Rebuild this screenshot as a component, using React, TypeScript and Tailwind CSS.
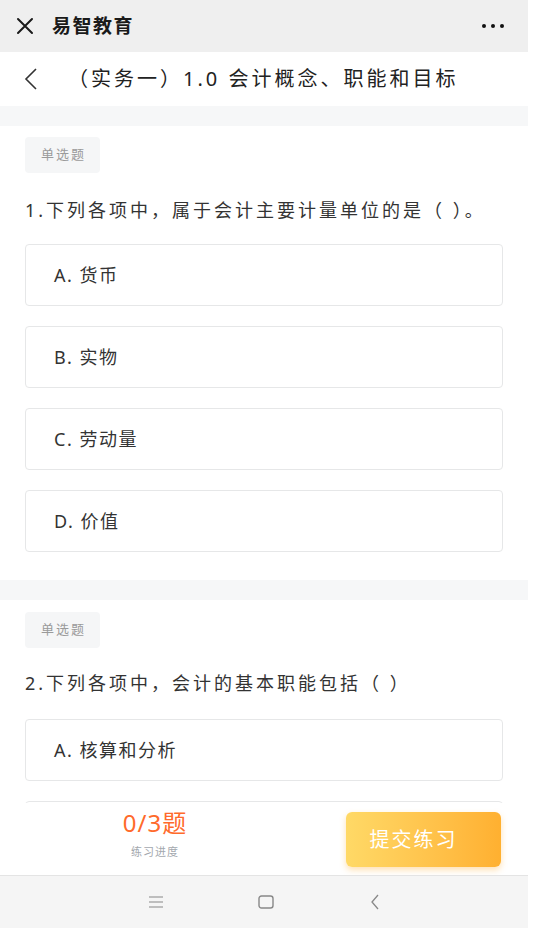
import React from "react";

const font = { fontFamily: '"Noto Sans", "Noto Sans CJK SC", sans-serif' };

function Badge() {
  return (
    <div className="flex h-[36px] w-[75px] items-center justify-center rounded-[4px] bg-[#f5f6f7] pl-[2px] text-[13px] tracking-[2px] text-[#9a9a9a]">
      单选题
    </div>
  );
}

function Option({ label }: { label: string }) {
  return (
    <div className="flex h-[62px] items-center rounded-[4px] border border-[#e6e7e8] bg-white pl-[28px] text-[18px] tracking-[1.5px] text-[#333]">
      {label}
    </div>
  );
}

export default function App() {
  return (
    <div className="h-[928px] w-[536px] overflow-hidden bg-white" style={font}>
      <div className="flex h-[928px] w-[528px] flex-col">
        {/* WeChat top bar */}
        <div className="flex h-[52px] shrink-0 items-center bg-[#efefef] pl-[15px] pr-[24px]">
          <svg width="20" height="20" viewBox="0 0 20 20" className="shrink-0">
            <path d="M3 3 L17 17 M17 3 L3 17" stroke="#1a1a1a" strokeWidth="2" strokeLinecap="round" />
          </svg>
          <div className="ml-[17px] text-[19px] font-bold tracking-[1.5px] text-[#1a1a1a]">易智教育</div>
          <div className="ml-auto flex gap-[5px]">
            <span className="h-[4px] w-[4px] rounded-full bg-[#111]" />
            <span className="h-[4px] w-[4px] rounded-full bg-[#111]" />
            <span className="h-[4px] w-[4px] rounded-full bg-[#111]" />
          </div>
        </div>
        {/* Page header */}
        <div className="flex h-[54px] shrink-0 items-center bg-white pl-[24px]">
          <svg width="14" height="24" viewBox="0 0 14 24" className="shrink-0">
            <path d="M12 2 L2 12 L12 22" fill="none" stroke="#333" strokeWidth="1.6" />
          </svg>
          <div className="ml-[30px] whitespace-nowrap text-[20px] tracking-[3px] text-[#222]">（实务一）1.0 会计概念、职能和目标</div>
        </div>
        {/* Content */}
        <div className="flex-1 overflow-hidden">
          <div className="h-[20px] bg-[#f6f7f8]" />
          <div className="px-[25px] pt-[11px]">
            <Badge />
            <div className="mt-[23px] whitespace-nowrap text-[18px] leading-[28px] tracking-[3px] text-[#333]">1.下列各项中，属于会计主要计量单位的是（ ）。</div>
            <div className="mt-[20px] flex flex-col gap-[20px]">
              <Option label="A. 货币" />
              <Option label="B. 实物" />
              <Option label="C. 劳动量" />
              <Option label="D. 价值" />
            </div>
          </div>
          <div className="mt-[28px] h-[20px] bg-[#f6f7f8]" />
          <div className="px-[25px] pt-[12px]">
            <Badge />
            <div className="mt-[21px] whitespace-nowrap text-[18px] leading-[28px] tracking-[3px] text-[#333]">2.下列各项中，会计的基本职能包括（ ）</div>
            <div className="mt-[22px] flex flex-col gap-[20px]">
              <Option label="A. 核算和分析" />
              <div className="h-[62px] rounded-[4px] border border-[#e6e7e8] bg-white" />
            </div>
          </div>
        </div>
        {/* Footer */}
        <div className="flex h-[72px] shrink-0 bg-white">
          <div className="flex flex-1 flex-col items-center pr-[36px] pt-[3px]">
            <div className="text-[24px] leading-[34px] tracking-[1px] text-[#ff6a2b]">0/3题</div>
            <div className="mt-[5px] text-[11px] leading-[14px] tracking-[1px] text-[#a3a8ae]">练习进度</div>
          </div>
          <div className="mr-[27px] mt-[9px] flex h-[55px] w-[155px] items-center justify-center rounded-[6px] bg-gradient-to-r from-[#ffd966] to-[#ffb030] pr-[20px] text-[20px] tracking-[2px] text-white shadow-[0_3px_6px_rgba(255,170,40,0.35)]">
            提交练习
          </div>
        </div>
        {/* Android nav */}
        <div className="flex h-[53px] shrink-0 items-center border-t border-[#e4e4e4] bg-[#f5f5f5]">
          <svg width="16" height="14" viewBox="0 0 16 14" className="ml-[148px]">
            <path d="M1 2 H15 M1 7 H15 M1 12 H15" stroke="#888" strokeWidth="1.2" />
          </svg>
          <svg width="16" height="14" viewBox="0 0 16 14" className="ml-[94px]">
            <rect x="1" y="1" width="14" height="12" rx="2.5" fill="none" stroke="#888" strokeWidth="1.4" />
          </svg>
          <svg width="10" height="16" viewBox="0 0 10 16" className="ml-[96px]">
            <path d="M8 1 L2 8 L8 15" fill="none" stroke="#888" strokeWidth="1.3" />
          </svg>
        </div>
      </div>
    </div>
  );
}
